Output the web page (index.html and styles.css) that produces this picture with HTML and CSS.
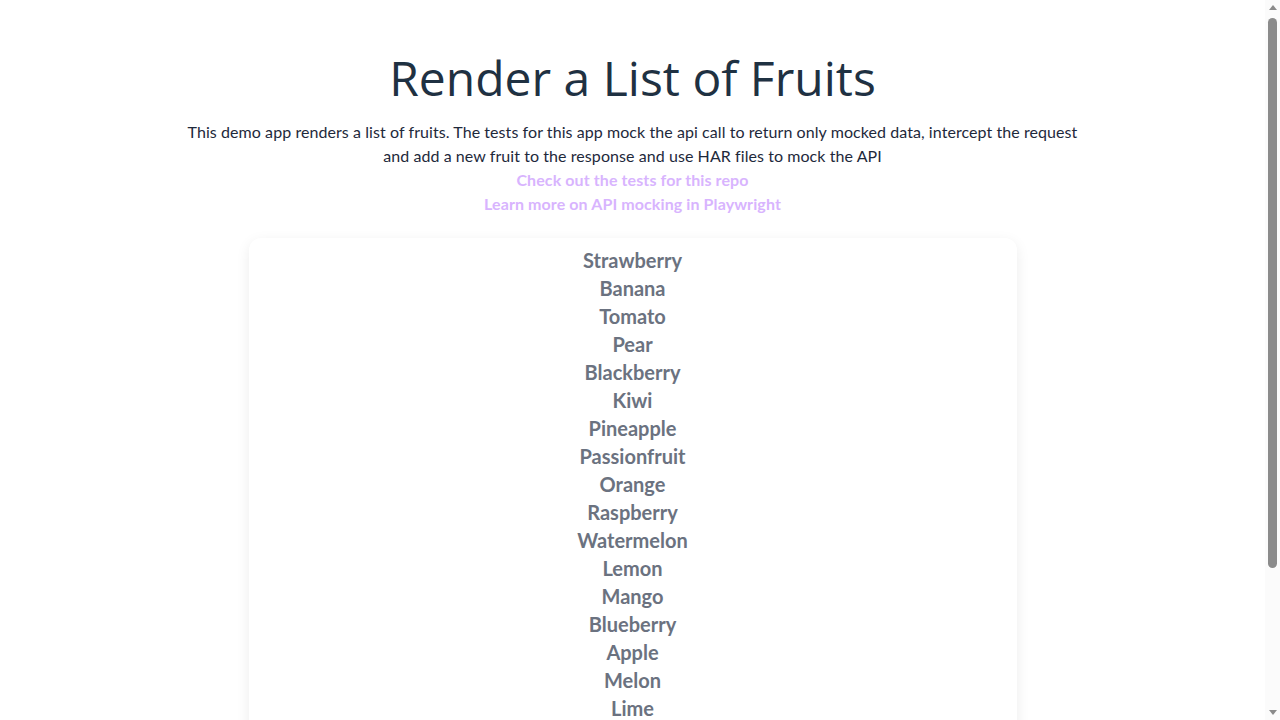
FILE: index.html
```html
<!DOCTYPE html>
<html lang="en">
<head>
<meta charset="utf-8">
<title>Render a List of Fruits</title>
<link rel="stylesheet" href="styles.css">
</head>
<body>
<main class="page">
  <h1 class="title">Render a List of Fruits</h1>
  <p class="intro">This demo app renders a list of fruits. The tests for this app mock the api call to return only mocked data, intercept the request and add a new fruit to the response and use HAR files to mock the API</p>
  <a class="link" href="#">Check out the tests for this repo</a>
  <a class="link" href="#">Learn more on API mocking in Playwright</a>
  <ul class="card">
    <li>Strawberry</li>
    <li>Banana</li>
    <li>Tomato</li>
    <li>Pear</li>
    <li>Blackberry</li>
    <li>Kiwi</li>
    <li>Pineapple</li>
    <li>Passionfruit</li>
    <li>Orange</li>
    <li>Raspberry</li>
    <li>Watermelon</li>
    <li>Lemon</li>
    <li>Mango</li>
    <li>Blueberry</li>
    <li>Apple</li>
    <li>Melon</li>
    <li>Lime</li>
  </ul>
</main>
<aside class="scrollbar" aria-hidden="true">
  <span class="arrow arrow-up"></span>
  <span class="track"><span class="thumb"></span></span>
  <span class="arrow arrow-down"></span>
</aside>
</body>
</html>
```

FILE: styles.css
```css
html, body {
  margin: 0;
  padding: 0;
  background: #ffffff;
}

body {
  font-family: "Lato", "Open Sans", sans-serif;
  color: #1e293b;
  padding-right: 15px;
}

.page {
  display: flex;
  flex-direction: column;
  align-items: center;
  padding: 54px 0 160px;
  text-align: center;
}

.title {
  margin: 0 0 18px;
  font-family: "Open Sans", "Noto Sans", sans-serif;
  font-size: 48px;
  line-height: 48px;
  font-weight: 400;
  color: #1f3142;
}

.intro {
  margin: 0;
  max-width: 896px;
  font-size: 16px;
  line-height: 24px;
  letter-spacing: 0.07px;
}

.link {
  display: block;
  font-size: 16px;
  line-height: 24px;
  font-weight: 700;
  letter-spacing: 0.1px;
  color: #d8b4fe;
  text-decoration: none;
}

.card {
  list-style: none;
  margin: 22px 0 0;
  padding: 8px 0 24px;
  width: 768px;
  border-radius: 12px;
  box-shadow: 0 4px 14px rgba(0, 0, 0, 0.08);
  background: #ffffff;
}

.card li {
  font-size: 20px;
  line-height: 28px;
  font-weight: 700;
  color: #6b7280;
}

/* fake classic scrollbar, overlaid at the right edge */
.scrollbar {
  position: fixed;
  top: 0;
  right: 0;
  width: 15px;
  height: 100vh;
  background: #fbfbfb;
  display: flex;
  flex-direction: column;
  align-items: center;
}

.arrow {
  flex: 0 0 15px;
  width: 15px;
  display: flex;
  align-items: center;
  justify-content: center;
}

.arrow::before {
  content: "";
  width: 0;
  height: 0;
  border-left: 4.5px solid transparent;
  border-right: 4.5px solid transparent;
}

.arrow-up::before {
  border-bottom: 5px solid #8b8b8b;
}

.arrow-down::before {
  border-top: 5px solid #8b8b8b;
}

.track {
  flex: 1;
  width: 15px;
  display: flex;
  justify-content: center;
  padding-top: 3px;
}

.thumb {
  width: 9px;
  height: 550px;
  border-radius: 5px;
  background: #8b8b8b;
}
```
